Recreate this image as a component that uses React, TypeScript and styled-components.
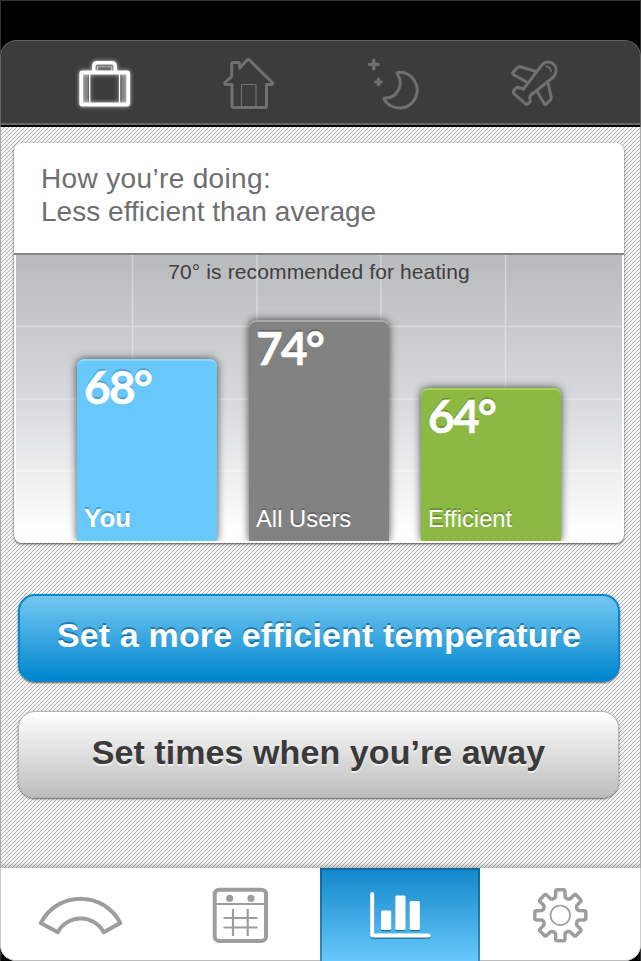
import React from "react";
import styled, { createGlobalStyle } from "styled-components";

const Global = createGlobalStyle`
  * { box-sizing: border-box; }
  body { margin: 0; background: #000; font-family: "Liberation Sans", Arial, sans-serif; overflow: hidden; }
  button { font-family: inherit; border: 0; padding: 0; cursor: pointer; background: none; }
`;

const Phone = styled.div`
  width: 641px;
  height: 961px;
  display: flex;
  flex-direction: column;
  background: #000;
  border: 1px solid #333;
  border-bottom: 0;
  padding-top: 39px;
`;

const Screen = styled.div`
  flex: 1;
  margin: 0 -1px;
  display: flex;
  flex-direction: column;
  border-radius: 16px;
  overflow: hidden;
`;

const ModeBar = styled.nav`
  height: 87px;
  flex: none;
  display: flex;
  background: #3c3c3c;
  border: 1px solid #666;
  border-width: 1px 1px 0;
  border-radius: 16px 16px 0 0;
  box-shadow: inset 0 -2px #000, inset 0 -4px #666;
`;

const ModeButton = styled.button<{ $active?: boolean }>`
  height: 86px;
  width: 160px;
  flex: none;
  margin-left: -1px;
  & + & { margin-left: 0; }
  &:last-child { width: 159px; }
  color: ${(p) => (p.$active ? "#fff" : "#707070")};
  svg { filter: ${(p) => (p.$active ? "drop-shadow(0 0 2px rgba(255,255,255,.75))" : "none")}; }
`;

const Icon = styled.svg`
  display: block;
  fill: none;
  stroke: currentColor;
  stroke-linejoin: round;
  stroke-linecap: round;
  overflow: visible;
`;

const Content = styled.main`
  flex: 1;
  padding: 16px 17px 0;
  display: flex;
  flex-direction: column;
  border: 1px solid #aaa;
  border-width: 0 1px;
  background-color: #fff;
  background-image: linear-gradient(to top, rgba(0,0,0,.2), transparent 6px),
    linear-gradient(135deg, #fff 6%, #f5f5f5 6%, #f5f5f5 44%, #b3b3b3 44%, #b3b3b3 56%, #f5f5f5 56%, #f5f5f5 94%, #fff 94%);
  background-size: 100% 100%, 4px 4px;
`;

const Card = styled.section`
  height: 400px;
  margin: 0 -2px 0 -4px;
  width: 610px;
  flex: none;
  border-radius: 8px;
  background: #fff;
  box-shadow: 0 1px 2px rgba(0, 0, 0, 0.55), 0 1px 5px rgba(0, 0, 0, 0.2);
`;

const Summary = styled.h1`
  margin: 0;
  height: 112px;
  padding: 19px 27px 0;
  font-size: 28px;
  font-weight: 400;
  line-height: 33px;
  letter-spacing: 0.04px;
  color: #6d6e70;
  border-bottom: 2px solid #858688;
`;

const SummaryLead = styled.span`
  display: block;
  letter-spacing: 0.35px;
`;

const Chart = styled.div`
  height: 286px;
  margin: 0 2px;
  position: relative;
  overflow: hidden;
  border-radius: 0 0 6px 6px;
  background: linear-gradient(#b9babc, #d9dadc 52%, #fff 97%);
`;

const Grid = styled.svg`
  position: absolute;
  inset: 0;
  stroke: rgba(255, 255, 255, 0.35);
  stroke-width: 1.5;
`;

const Hint = styled.p`
  position: relative;
  margin: 0;
  padding: 5px 0 0;
  height: 28px;
  text-align: center;
  font-size: 21px;
  line-height: 24px;
  letter-spacing: 0.12px;
  color: #3f3f40;
`;

const Bars = styled.div`
  position: relative;
  display: flex;
  align-items: flex-end;
  gap: 32px;
  height: 258px;
  padding-left: 61px;
`;

const Bar = styled.div<{ $h: number; $fill: string; $light: string; $dark: string }>`
  width: 140px;
  height: ${(p) => p.$h}px;
  padding: 4px 7px 9px;
  display: flex;
  flex-direction: column;
  justify-content: space-between;
  border-radius: 7px 7px 0 0;
  background: ${(p) => p.$fill};
  box-shadow: 0 0 8px rgba(0, 0, 0, 0.7), inset 0 2px ${(p) => p.$light};
  color: #fff;
  text-shadow: 0 -2px ${(p) => p.$dark};
`;

const BarLabel = styled.div<{ $strong?: boolean }>`
  font-size: ${(p) => (p.$strong ? 26 : 23.8)}px;
  line-height: 27px;
  font-weight: ${(p) => (p.$strong ? 700 : 400)};
`;

const Degrees = styled.div`
  font: 700 46px/47px Lato, sans-serif;
  letter-spacing: -1.8px;
  -webkit-text-stroke: 0.5px #fff;
`;

const Action = styled.button<{ $primary?: boolean }>`
  height: ${(p) => (p.$primary ? 88 : 87)}px;
  width: ${(p) => (p.$primary ? 602 : 601)}px;
  flex: none;
  margin-top: ${(p) => (p.$primary ? 51 : 29)}px;
  border-radius: 17px;
  border: ${(p) => (p.$primary ? "2px solid #0a87cf" : "1px solid #b5b5b5")};
  background: ${(p) => (p.$primary ? "linear-gradient(#74c8f2, #0086ce)" : "linear-gradient(#fff, #bdbdbd)")};
  box-shadow: 0 1px 2px rgba(0, 0, 0, 0.6);
  color: ${(p) => (p.$primary ? "#fff" : "#3a3a3a")};
  text-shadow: ${(p) => (p.$primary ? "0 -2px rgba(0,70,115,.5)" : "0 2px rgba(255,255,255,.65)")};
  font-size: 34px;
  font-weight: 700;
  letter-spacing: ${(p) => (p.$primary ? 0.14 : 0.08)}px;
  padding-bottom: ${(p) => (p.$primary ? 6 : 4)}px;
`;

const TabBar = styled.nav`
  height: 93px;
  flex: none;
  display: flex;
  background: #fff;
  color: #9d9d9d;
  border-radius: 0 0 16px 16px;
  box-shadow: inset 0 -1px #bbb, inset 1px 0 #ccc, inset -1px 0 #ccc;
`;

const Tab = styled.button<{ $active?: boolean }>`
  width: 160px;
  height: 93px;
  color: ${(p) => (p.$active ? "#fff" : "inherit")};
  background: ${(p) => (p.$active ? "linear-gradient(#1287ca, #68c8fb)" : "none")};
  box-shadow: ${(p) => (p.$active ? "inset 0 2px #126a9f, inset 2px 0 rgba(0,65,105,.45), inset -2px 0 rgba(0,65,105,.45)" : "none")};
`;

const Suitcase = () => (
  <Icon width="160" height="86" viewBox="0 40 160 86">
    <rect x="81.2" y="71.5" width="47" height="32" rx="1" strokeWidth="3.800" />
    <path d="M93.800 70V65q0-3.200 3.200-3.200h15q3.200 0 3.200 3.200v5" strokeWidth="3.400" />
    <path d="M97.500 69v-3.200h14V69" strokeWidth="1" opacity=".5" />
    <path d="M89.700 72v31M119.500 72v31" strokeWidth="1.300" />
    <path d="M85.500 73v29M124 73v29" strokeWidth="5" opacity=".2" strokeLinecap="butt" />
  </Icon>
);

const House = () => (
  <Icon width="160" height="86" viewBox="160 40 160 86" strokeWidth="3">
    <path d="M232 83.500V105q0 1.500 1.500 1.500h31.500q1.500 0 1.500-1.500V83.500h5q2-.5.8-2L249.700 59.300q-1.400-1.400-2.800 0L239.700 67V63.500q0-2-1.500-2h-5q-1.500 0-1.500 1.500v12.500l-6.700 6q-1 2 1 2z" />
    <path d="M239 61.500v8l4-4z" fill="currentColor" stroke="none" />
    <path d="M241.500 106V84.500q0-1 1-1H255q1 0 1 1V106" strokeWidth="1.200" />
  </Icon>
);

const Night = () => (
  <Icon width="160" height="86" viewBox="320 40 160 86" strokeWidth="3">
    <path d="M398.500 71.400A17.800 17.800 0 1 1 384.500 99Q383.300 97 385.600 97C396 97.500 405 84 397.300 73Q396.500 71.200 398.500 71.400Z" />
    <path d="M373.800 59v8.800M369.300 63.300h9M378.500 78.200v5.600M375.700 81h5.600" strokeWidth="3.200" />
  </Icon>
);

const Plane = () => (
  <Icon width="160" height="86" viewBox="480 40 160 86" strokeWidth="3">
    <path d="M523.500 88L542 63.800C548.500 56.300 560.500 64.500 554.500 74.500Q553 76.500 550.500 78.500L531.500 93.500" />
    <path d="M536.500 70.500L519.800 65.800Q518.500 65.500 517.500 66.500L513 71.200Q512.200 72.500 513.500 73.500L526.500 81" />
    <path d="M547.700 80.500L551.300 96.500Q551.500 98 550.300 99L546.500 103Q545.300 104 544.500 103L536.700 90" />
    <path d="M523.500 88L518.500 86.500Q517 86 516 87L513.500 90Q512.800 91.500 514 92.700L525.500 102.800Q526.500 104 527.700 102.800L530 101Q530.700 100 530 98.500L529.700 96Q530 94.700 532 92.500" />
    <path d="M546 65Q550.500 66 551.200 70.500" strokeWidth="1.500" />
  </Icon>
);

const Dial = () => (
  <Icon width="160" height="93" viewBox="0 868 160 93" strokeWidth="4">
    <path d="M40.800 923A44.700 44.700 0 0 1 120.300 923L103.700 932.300A26 26 0 0 0 57.700 932.300Z" />
  </Icon>
);

const Calendar = () => (
  <Icon width="160" height="93" viewBox="160 868 160 93">
    <rect x="214.700" y="889.700" width="51.300" height="51.300" rx="4.500" strokeWidth="4" />
    <path d="M215 904h51" strokeWidth="2" />
    <path d="M233 909v27M247.700 909v27M223.500 918h34M223.500 927.500h34" strokeWidth="2.200" strokeLinecap="butt" />
    <g fill="currentColor" stroke="none">
      <circle cx="229.700" cy="898.300" r="3.600" />
      <circle cx="251" cy="898.300" r="3.600" />
    </g>
  </Icon>
);

const ChartShapes = () => (
  <>
    <path d="M372.200 894v41.500h56.500" strokeWidth="4" fill="none" />
    <g fill="currentColor" stroke="none">
      <rect x="381" y="910.500" width="10.300" height="19.500" rx="1.500" />
      <rect x="395.300" y="895.500" width="10.300" height="34.500" rx="1.500" />
      <rect x="409.600" y="901" width="10.300" height="29" rx="1.500" />
    </g>
  </>
);

const ChartIcon = () => (
  <Icon width="160" height="93" viewBox="320 868 160 93">
    <g color="#296f98" transform="translate(0 1.300)"><g stroke="currentColor"><ChartShapes /></g></g>
    <g stroke="currentColor"><ChartShapes /></g>
  </Icon>
);

const polar = (r: number, deg: number) => {
  const a = (deg * Math.PI) / 180;
  return `${(560.3 + r * Math.sin(a)).toFixed(2)} ${(915.3 - r * Math.cos(a)).toFixed(2)}`;
};

const gearPath =
  Array.from({ length: 8 }, (_, i) => {
    const c = i * 45;
    return `${i ? "L" : "M"}${polar(19, c - 14.5)}L${polar(24.2, c - 11)}Q${polar(26, c - 10)} ${polar(25.7, c - 7)}L${polar(25.7, c + 7)}Q${polar(26, c + 10)} ${polar(24.2, c + 11)}L${polar(19, c + 14.5)}Q${polar(16.8, c + 22.5)} ${polar(19, c + 30.5)}`;
  }).join("") + "Z";

const Gear = () => (
  <Icon width="160" height="93" viewBox="480 868 160 93">
    <path d={gearPath} strokeWidth="3.500" />
    <circle cx="560.300" cy="915.300" r="9.800" strokeWidth="1.700" />
  </Icon>
);

export default function App() {
  return (
    <>
      <Global />
      <Phone>
        <Screen>
          <ModeBar>
            <ModeButton $active aria-label="Away"><Suitcase /></ModeButton>
            <ModeButton aria-label="Home"><House /></ModeButton>
            <ModeButton aria-label="Night"><Night /></ModeButton>
            <ModeButton aria-label="Travel"><Plane /></ModeButton>
          </ModeBar>
          <Content>
            <Card>
              <Summary><SummaryLead>How you’re doing:</SummaryLead>Less efficient than average</Summary>
              <Chart>
                <Grid width="606" height="286">
                  <path d="M116.500 0V286M241 0V286M365 0V286M489.500 0V286M0 71.500H606M0 144H606M0 216H606" />
                </Grid>
                <Hint>70° is recommended for heating</Hint>
                <Bars>
                  <Bar $h={182} $fill="#68c8fb" $light="#8cd8ff" $dark="#4a9fcd">
                    <Degrees>68°</Degrees>
                    <BarLabel $strong>You</BarLabel>
                  </Bar>
                  <Bar $h={221} $fill="#828282" $light="#aaa" $dark="#646464">
                    <Degrees>74°</Degrees>
                    <BarLabel>All Users</BarLabel>
                  </Bar>
                  <Bar $h={153} $fill="#8cb943" $light="#a8d352" $dark="#6d9233">
                    <Degrees>64°</Degrees>
                    <BarLabel>Efficient</BarLabel>
                  </Bar>
                </Bars>
              </Chart>
            </Card>
            <Action $primary>Set a more efficient temperature</Action>
            <Action>Set times when you’re away</Action>
          </Content>
          <TabBar>
            <Tab aria-label="Thermostat"><Dial /></Tab>
            <Tab aria-label="Schedule"><Calendar /></Tab>
            <Tab $active aria-label="Usage"><ChartIcon /></Tab>
            <Tab aria-label="Settings"><Gear /></Tab>
          </TabBar>
        </Screen>
      </Phone>
    </>
  );
}
